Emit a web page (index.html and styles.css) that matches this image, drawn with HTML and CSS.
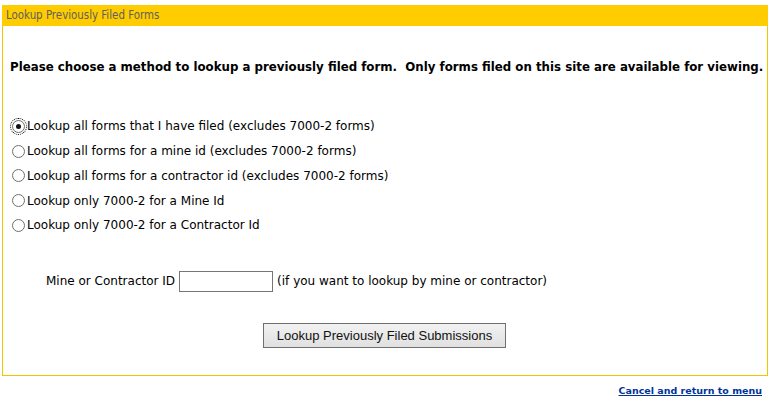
FILE: index.html
```html
<!DOCTYPE html>
<html>
<head>
<meta charset="utf-8">
<link rel="stylesheet" href="styles.css">
</head>
<body>
<div class="panel">
  <div class="panel-head">Lookup Previously Filed Forms</div>
  <div class="panel-body">
    <p class="intro">Please choose a method to lookup a previously filed form.&nbsp; Only forms filed on this site are available for viewing.</p>
    <div class="options">
      <label class="opt"><input type="radio" name="m" class="radio focus" checked>Lookup all forms that I have filed (excludes 7000-2 forms)</label>
      <label class="opt"><input type="radio" name="m" class="radio">Lookup all forms for a mine id (excludes 7000-2 forms)</label>
      <label class="opt"><input type="radio" name="m" class="radio">Lookup all forms for a contractor id (excludes 7000-2 forms)</label>
      <label class="opt"><input type="radio" name="m" class="radio">Lookup only 7000-2 for a Mine Id</label>
      <label class="opt"><input type="radio" name="m" class="radio">Lookup only 7000-2 for a Contractor Id</label>
    </div>
    <div class="idrow">
      <span>Mine or Contractor ID</span>
      <input type="text" class="idinput">
      <span>(if you want to lookup by mine or contractor)</span>
    </div>
    <div class="btnrow">
      <button class="btn">Lookup Previously Filed Submissions</button>
    </div>
  </div>
</div>
<div class="footer">
  <a href="#" class="cancel">Cancel and return to menu</a>
</div>
</body>
</html>
```
FILE: styles.css
```css
html, body {
  margin: 0;
  padding: 0;
  background: #fff;
}
body {
  font-family: "DejaVu Sans", Verdana, sans-serif;
  font-size: 12px;
  color: #000;
  padding: 5px 14px 0 2px;
}
.panel {
  width: 764px;
  border: 1px solid #f5c400;
  border-top: none;
}
.panel-head {
  background: #ffcc00;
  height: 21px;
  line-height: 21px;
  padding-left: 4px;
  margin: 0 -1px;
  font-family: "DejaVu Sans Condensed", Tahoma, sans-serif;
  font-size: 11.4px;
  color: #606060;
}
.panel-body {
  padding: 0 0 27px 7px;
}
.intro {
  margin: 31px 0 0 0;
  font-weight: bold;
  font-size: 11.8px;
  line-height: 20px;
  white-space: nowrap;
}
.options {
  display: flex;
  flex-direction: column;
  margin-top: 37px;
}
.opt {
  display: flex;
  align-items: center;
  height: 24.75px;
  font-size: 12px;
}
.radio {
  appearance: none;
  -webkit-appearance: none;
  width: 13px;
  height: 13px;
  margin: 0 2px 0 2px;
  border: 1px solid #6f6f6f;
  border-radius: 50%;
  background: #fff;
  position: relative;
  flex: none;
}
.radio:checked::after {
  content: "";
  position: absolute;
  left: 3px;
  top: 3px;
  width: 5px;
  height: 5px;
  border-radius: 50%;
  background: #111;
}
.focus {
  outline: 1px dotted #000;
  outline-offset: 1px;
}
.idrow {
  display: flex;
  align-items: center;
  gap: 4px;
  margin-top: 33px;
  padding-left: 36px;
  font-size: 12px;
}
.idinput {
  width: 90px;
  height: 17px;
  margin: 0;
  padding: 1px;
  border: 1px solid #767676;
  box-sizing: content-box;
}
.btnrow {
  display: flex;
  justify-content: center;
  margin-top: 31px;
  padding-right: 8px;
}
.btn {
  font-family: "Liberation Sans", Arial, sans-serif;
  font-size: 13px;
  color: #111;
  height: 25px;
  width: 243px;
  padding: 0;
  background: linear-gradient(#f2f2f2, #e0e0e0);
  border: 1px solid #707070;
  border-radius: 0;
}
.footer {
  display: flex;
  justify-content: flex-end;
  padding-top: 9px;
  width: 760px;
}
.cancel {
  font-weight: bold;
  font-size: 9.5px;
  color: #003399;
  text-decoration: underline;
}
```
